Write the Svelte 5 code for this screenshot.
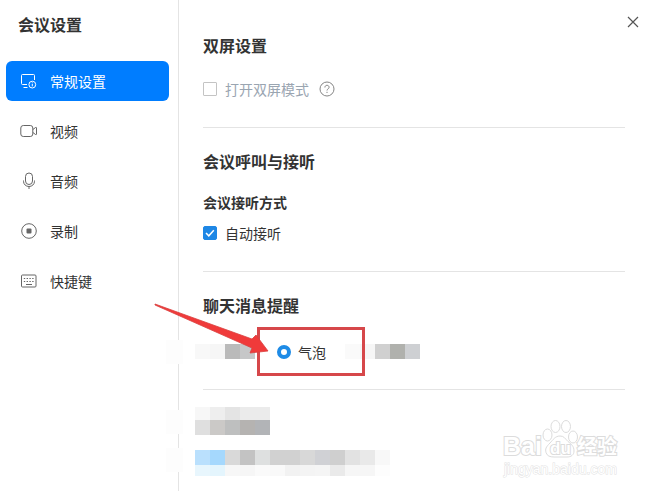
<script>
  let current = 'general';
  let dualScreen = false;
  let autoAnswer = true;
  let remind = 'bubble';

  const items = [
    { id: 'general', label: '常规设置' },
    { id: 'video', label: '视频' },
    { id: 'audio', label: '音频' },
    { id: 'record', label: '录制' },
    { id: 'shortcut', label: '快捷键' }
  ];

  // blurred-out areas, one colour per block
  const before = ['#f8f8f8', '#f6f6f6', '#bababa', '#c6c7c8'];
  const after = ['#fafafa', '#f6f6f6', '#d0d0d0', '#b0b1ad', '#ced0d3'];
  const hiddenTitle = [
    ['#f7f7f7', '#eeeeee', '#e4e4e4', '#ebebeb', '#ebebeb'],
    ['#dfdfdf', '#cbc9c7', '#bebfbf', '#b5b3b1', '#b2b4b7']
  ];
  const hiddenRow = [
    ['#bae0fd', '#a5d8fd', '#d9d9d9', '#c3c3c3', '#dee0e0', '#d1d1d1', '#d1d1d1', '#d8d8d8', '#d0d1d5', '#cfcfcf', '#e2e2e2', '#e9e9e9', '#f8f8f8'],
    ['#e8f6fd', '#e4f5fd', '#f7f7f7', '#f6f6f6', '#fafafa', '#f9f9f9', '#f2f2f2', '#f4f4f4', '#f5f5f5', '#eaeaea', '#f6f6f6', '#f6f6f6', '#fdfdfd']
  ];
</script>

<div class="window">
  <aside class="sidebar">
    <h1>会议设置</h1>
    <nav>
      {#each items as item}
        <button class={`item ${current === item.id ? 'active' : ''}`} on:click={() => (current = item.id)}>
          <svg width="18" height="18" viewBox="0 0 18 18" fill="none" stroke="currentColor" aria-hidden="true">
            {#if item.id === 'general'}
              <path d="M7 12.5H2.5a1 1 0 0 1-1-1v-8a1 1 0 0 1 1-1h11a1 1 0 0 1 1 1V8M3.5 15.5h4" />
              <circle cx="12.3" cy="12.6" r="3.4" />
              <path d="M12.3 12v2.4M12.3 10.4v.9" />
            {:else if item.id === 'video'}
              <rect x=".8" y="3.5" width="12" height="11" rx="2.5" />
              <path d="M12.8 7.6l2.7-2.1q1-.5 1 .5v6q0 1-1 .5l-2.7-2.1" />
            {:else if item.id === 'audio'}
              <rect x="5.5" y="1" width="7" height="11.5" rx="3.5" />
              <path d="M3.5 8.5v.8c0 3 2.4 5.2 5.5 5.2s5.5-2.2 5.5-5.2v-.8M9 14.5V17" />
            {:else if item.id === 'record'}
              <circle cx="9" cy="9" r="7.3" />
              <rect x="6.5" y="6.5" width="5" height="5" rx="1" fill="currentColor" stroke="none" />
            {:else}
              <rect x="1.5" y="3" width="14.5" height="12" rx="1" />
              <path d="M3.8 6.5h10.5M3.8 9.5h10.5" stroke-dasharray="1.4 1.4" />
              <path d="M6 12.5h6" />
            {/if}
          </svg>
          <span>{item.label}</span>
        </button>
      {/each}
    </nav>
    <i class="smudge first"></i>
    <i class="smudge second"></i>
    <i class="smudge third"></i>
  </aside>

  <main>
    <button class="close" aria-label="关闭">
      <svg width="12" height="12" viewBox="0 0 12 12" stroke="#555" stroke-width="1.2"><path d="M1 1l10 10M11 1L1 11" /></svg>
    </button>

    <section class="dual">
      <h2>双屏设置</h2>
      <div class="row">
        <label class="muted"><input type="checkbox" bind:checked={dualScreen} />打开双屏模式</label>
        <button class="help" aria-label="帮助">
          <svg width="16" height="16" viewBox="0 0 16 16" fill="none" stroke="#858585">
            <circle cx="8" cy="8" r="7" />
            <path d="M5.9 6.5c0-1.4.9-2.2 2.1-2.2s2.1.8 2.1 2c0 1.5-2.1 1.6-2.1 3.2M8 10.8v1.2" />
          </svg>
        </button>
      </div>
    </section>

    <section class="call">
      <h2>会议呼叫与接听</h2>
      <h3>会议接听方式</h3>
      <div class="row">
        <label><input type="checkbox" bind:checked={autoAnswer} />自动接听</label>
      </div>
    </section>

    <section class="chat">
      <h2>聊天消息提醒</h2>
      <div class="remind">
        <div class="mosaic left">
          {#each before as c}<i style="background:{c}"></i>{/each}
        </div>
        <div class="marked">
          <label><input type="radio" name="remind" value="bubble" bind:group={remind} />气泡</label>
          <svg class="arrow" width="116" height="54" viewBox="0 0 116 54" aria-hidden="true">
            <path d="M2 3L99 38L103 34L115 50L97 52L99 47L2 4z" fill="#f03a3a" stroke="#d9403f" stroke-width=".8" />
          </svg>
        </div>
        <div class="mosaic right">
          {#each after as c}<i style="background:{c}"></i>{/each}
        </div>
      </div>
    </section>

    <section class="hidden">
      <div class="blurred title">
        {#each hiddenTitle as line}
          <div class="mosaic">{#each line as c}<i style="background:{c}"></i>{/each}</div>
        {/each}
      </div>
      <div class="blurred">
        {#each hiddenRow as line}
          <div class="mosaic">{#each line as c}<i style="background:{c}"></i>{/each}</div>
        {/each}
      </div>
    </section>
  </main>

  <svg class="watermark" width="120" height="62" viewBox="0 0 120 62" fill="#fff" stroke="#dcdcdc">
    <text class="logo" x="1" y="39">Bai</text>
    <ellipse cx="45.5" cy="19" rx="4.5" ry="6" />
    <ellipse cx="53.5" cy="10.5" rx="4.5" ry="6" />
    <ellipse cx="64" cy="10.5" rx="4.5" ry="6" />
    <ellipse cx="71" cy="21" rx="4.5" ry="6" />
    <path d="M58 20c-5 0-7 4-10 7c-4 4-5 6-4 9.5c1 3.5 4 4.5 8 4.5h13c4 0 7-2 7-6c0-5-3-7-6-9.5c-3-3-4-5.5-8-5.5z" />
    <text class="du" x="48" y="38">du</text>
    <text class="cn" x="75" y="38">经验</text>
    <text class="url" x="2" y="58">jingyan.baidu.com</text>
  </svg>
</div>

<style>
  :global(body) { margin:0; background:#fff; }
  .window { position:relative; display:flex; min-height:100vh; background:#fff; color:#333; font-family:"Noto Sans CJK SC", sans-serif; font-size:14px; line-height:20px; overflow:hidden; }
  h1, h2, h3 { margin:0; color:#333; font-weight:700; font-size:16px; line-height:24px; }
  h3 { font-size:14px; line-height:20px; }
  button { font:inherit; border:0; background:none; padding:0; color:inherit; }

  .sidebar { position:relative; box-sizing:border-box; width:179px; flex:none; border-right:1px solid #e4e4e4; padding:12px 9px 0 6px; }
  .sidebar h1 { padding-left:12px; }
  nav { display:flex; flex-direction:column; gap:10px; margin-top:25px; }
  .item { display:flex; align-items:center; gap:12px; height:40px; padding:0 14px; border-radius:6px; text-align:left; }
  .item svg { color:#666; }
  .item.active, .item.active svg { background:#007dff; color:#fff; }
  .smudge { position:absolute; right:-5px; width:17px; height:24px; background:#fdfdfd; }
  .first { top:340px; }
  .second { top:410px; }
  .third { top:448px; }

  main { flex:1; min-width:0; padding:0 29px 0 24px; }
  .close { position:absolute; top:16px; right:15px; display:flex; }
  section { border-bottom:1px solid #e4e4e4; }
  .row { display:flex; align-items:center; gap:10px; }
  label { display:flex; align-items:center; gap:8px; }
  .muted { color:#9aa5b1; }
  .help { display:flex; }
  .dual { padding:33px 0 28px; }
  .dual .row { margin-top:22px; height:20px; }
  .call { padding:21px 0 28px; }
  .call h3 { margin-top:19px; }
  .call .row { margin-top:11px; }
  .chat { padding:21px 0 13px; }

  input { appearance:none; margin:0; box-sizing:border-box; width:14px; height:14px; }
  input[type="checkbox"] { border:1px solid #c4c4c4; border-radius:1px; background:#fff; }
  input[type="checkbox"]:checked { border-color:#1e87e5; border-radius:2px; background:#1e87e5 url('data:image/svg+xml,<svg xmlns="http://www.w3.org/2000/svg" viewBox="0 0 12 12" fill="none" stroke="white" stroke-width="1.5"><path d="M2 6l2.8 2.8 5-5.5"/></svg>'); }
  input[type="radio"] { border:4px solid #1e8be6; border-radius:50%; background:#fff; }

  .remind { display:flex; align-items:center; margin:10px 0 0 -8px; }
  .marked { position:relative; z-index:1; box-sizing:border-box; flex:none; width:108px; height:49px; margin-left:2px; padding-left:17px; border:3px solid #d6474a; display:flex; align-items:center; }
  .marked label { gap:7px; }
  .arrow { position:absolute; left:-107px; top:-29px; }
  .mosaic { display:flex; }
  .mosaic i { width:15px; height:15px; }
  .right { margin-left:-20px; }
  .hidden { border:0; padding:17px 0 14px; }
  .blurred { margin-left:-8px; }
  .title { margin-bottom:15px; }
  .title .mosaic:first-child i { height:13px; }
  .blurred:last-child .mosaic:last-child i { height:11px; }

  .watermark { position:absolute; right:32px; bottom:13px; }
  .watermark text { font-family:"Liberation Sans", sans-serif; font-weight:700; paint-order:stroke; stroke-width:2px; }
  .watermark .logo { font-size:25px; }
  .watermark .du { font-size:17px; }
  .watermark .cn { font-family:"Noto Sans CJK SC", sans-serif; font-size:20px; }
  .watermark .url { font-size:14px; font-weight:400; stroke-width:1px; stroke:#e2e2e2; }
</style>
